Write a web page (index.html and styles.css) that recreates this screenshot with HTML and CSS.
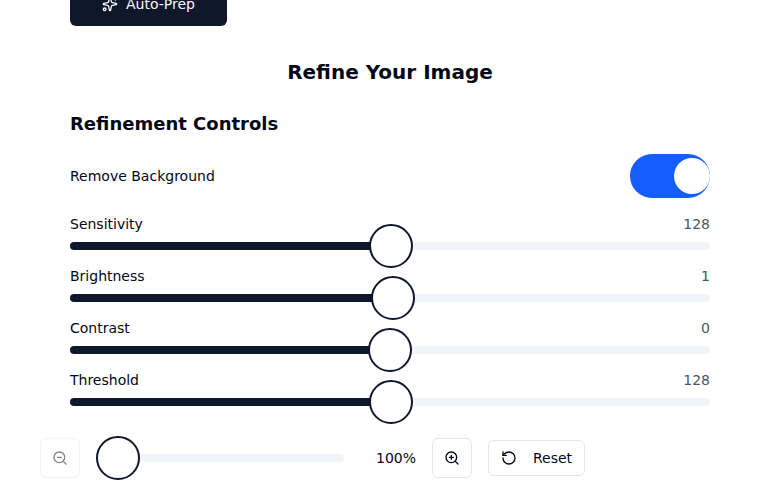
FILE: index.html
```html
<!DOCTYPE html>
<html lang="en">
<head>
<meta charset="utf-8">
<title>Refine Your Image</title>
<link rel="stylesheet" href="styles.css">
</head>
<body>
<main class="page">
  <button class="prep"><svg class="icon" viewBox="0 0 24 24"><path d="M11.017 2.814a1 1 0 0 1 1.966 0l1.051 5.558a2 2 0 0 0 1.594 1.594l5.558 1.051a1 1 0 0 1 0 1.966l-5.558 1.051a2 2 0 0 0-1.594 1.594l-1.051 5.558a1 1 0 0 1-1.966 0l-1.051-5.558a2 2 0 0 0-1.594-1.594l-5.558-1.051a1 1 0 0 1 0-1.966l5.558-1.051a2 2 0 0 0 1.594-1.594z"/><path d="M20 2v4M22 4h-4"/><circle cx="4" cy="20" r="2"/></svg>Auto-Prep</button>
  <h2 class="title">Refine Your Image</h2>
  <h3 class="subtitle">Refinement Controls</h3>
  <div class="row toggle-row"><span>Remove Background</span><span class="switch"><span class="knob"></span></span></div>
  <div class="control"><div class="row"><span>Sensitivity</span><span class="value">128</span></div><div class="slider"><span class="fill sensitivity"></span><span class="thumb"></span></div></div>
  <div class="control"><div class="row"><span>Brightness</span><span class="value">1</span></div><div class="slider"><span class="fill brightness"></span><span class="thumb"></span></div></div>
  <div class="control"><div class="row"><span>Contrast</span><span class="value">0</span></div><div class="slider"><span class="fill contrast"></span><span class="thumb"></span></div></div>
  <div class="control"><div class="row"><span>Threshold</span><span class="value">128</span></div><div class="slider"><span class="fill sensitivity"></span><span class="thumb"></span></div></div>
</main>
<div class="zoombar">
  <button class="btn square disabled"><svg class="icon" viewBox="0 0 24 24"><circle cx="11" cy="11" r="8"/><path d="m21 21-4.35-4.35M8 11h6"/></svg></button>
  <div class="slider zoom-slider"><span class="thumb"></span></div>
  <span class="percent">100%</span>
  <button class="btn square"><svg class="icon" viewBox="0 0 24 24"><circle cx="11" cy="11" r="8"/><path d="m21 21-4.35-4.35M11 8v6M8 11h6"/></svg></button>
  <button class="btn reset"><svg class="icon" viewBox="0 0 24 24"><path d="M3 12a9 9 0 1 0 9-9 9.75 9.75 0 0 0-6.74 2.74L3 8"/><path d="M3 3v5h5"/></svg>Reset</button>
</div>
</body>
</html>
```
FILE: styles.css
```css
* { box-sizing: border-box; }
html { overflow: hidden; }
body { margin: 0; height: 493px; display: flow-root; background: #fff; color: #020817; font: 14px/20px "DejaVu Sans", sans-serif; }
button { font: inherit; padding: 0; }
h2, h3 { margin: 0; font-weight: 700; }
.page { width: 640px; margin: 0 auto; display: flex; flex-direction: column; }
.icon { width: 16px; height: 16px; flex: none; fill: none; stroke: currentColor; stroke-width: 2; stroke-linecap: round; stroke-linejoin: round; }
.prep { width: 157px; height: 44px; margin-top: -18px; display: flex; align-items: center; justify-content: center; gap: 8px; border: 0; border-radius: 6px; background: #0f172a; color: #f8fafc; }
.title { margin-top: 32px; font-size: 20px; line-height: 28px; text-align: center; }
.subtitle { margin-top: 24px; font-size: 18px; line-height: 28px; }
.row { display: flex; justify-content: space-between; align-items: center; }
.toggle-row { margin: 16px 0; }
.switch { width: 80px; height: 44px; border-radius: 22px; background: #155dfc; display: flex; justify-content: flex-end; align-items: center; }
.knob { width: 36px; height: 36px; border-radius: 50%; background: #fff; }
.control { margin-bottom: 16px; }
.value { color: #4a5565; }
.slider { height: 8px; margin-top: 8px; border-radius: 4px; background: #f1f5f9; display: flex; align-items: center; }
.fill { height: 8px; border-radius: 4px 0 0 4px; background: #0f172a; }
.sensitivity { width: 321px; }
.brightness { width: 323px; }
.contrast { width: 320px; }
.thumb { width: 44px; height: 44px; flex: none; border: 2px solid #0f172a; border-radius: 50%; background: #fff; }
.fill + .thumb { margin-left: -22px; }
.zoombar { margin: 16px 0 0 40px; display: flex; align-items: center; }
.btn { display: flex; align-items: center; justify-content: center; border: 1px solid #e2e8f0; border-radius: 6px; background: #fff; color: #020817; }
.square { width: 40px; height: 40px; }
.disabled { opacity: .5; }
.zoom-slider { width: 248px; margin: 0 16px; }
.percent { width: 56px; margin-right: 16px; text-align: right; }
.reset { width: 97px; height: 36px; margin-left: 16px; gap: 16px; }
```
